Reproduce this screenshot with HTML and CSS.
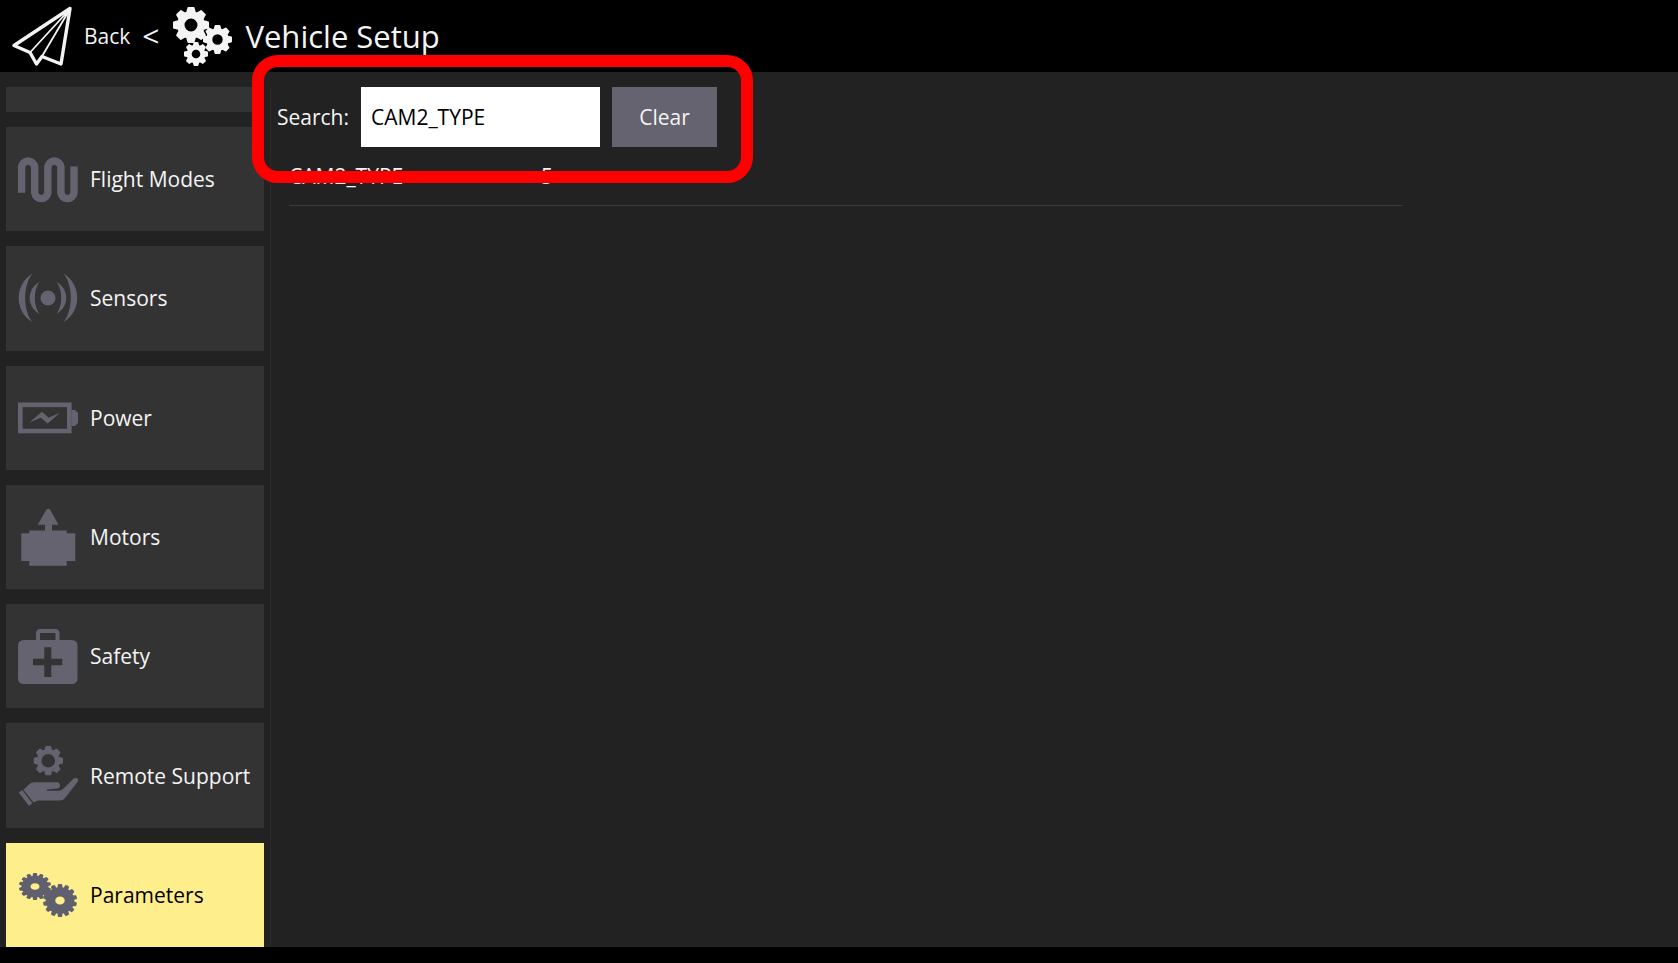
FILE: index.html
```
<!DOCTYPE html>
<html lang="en">
<head>
    <meta charset="UTF-8">
    <meta name="viewport" content="width=device-width, initial-scale=1.0">
    <title>Vehicle Setup</title>
    <link rel="stylesheet" href="styles.css">
</head>
<body>

<!-- Shared gear shapes, stroke-width on the gear sets the size of its hole -->
<svg class="defs" aria-hidden="true">
    <symbol id="gear" viewBox="-50 -50 100 100">
        <circle r="33" fill="none" stroke="currentColor" stroke-width="11"/>
        <circle r="26" fill="none" stroke="currentColor"/>
        <g fill="currentColor">
            <path id="teeth" d="M-8-50H8Q10-50 11-44L14-33H-14L-11-44Q-10-50-8-50ZM-8 50H8Q10 50 11 44L14 33H-14L-11 44Q-10 50-8 50Z"/>
            <use href="#teeth" transform="rotate(45)"/>
            <use href="#teeth" transform="rotate(90)"/>
            <use href="#teeth" transform="rotate(135)"/>
        </g>
    </symbol>
    <symbol id="cog" viewBox="-50 -50 100 100" preserveAspectRatio="none">
        <ellipse rx="28" ry="26" fill="none" stroke="currentColor" stroke-width="28"/>
        <g fill="currentColor">
            <path id="cogteeth" d="M-6-49Q0-52 6-49L8-36H-8ZM-6 49Q0 52 6 49L8 36H-8Z"/>
            <use href="#cogteeth" transform="rotate(26)"/>
            <use href="#cogteeth" transform="rotate(52)"/>
            <use href="#cogteeth" transform="rotate(78)"/>
            <use href="#cogteeth" transform="rotate(104)"/>
            <use href="#cogteeth" transform="rotate(129)"/>
            <use href="#cogteeth" transform="rotate(154)"/>
        </g>
    </symbol>
</svg>

<header class="toolbar">
    <a class="back" href="#">
        <svg class="icon" viewBox="0 0 60 60">
            <path d="M58 2.5L2 39.5L18 46.5L24.5 58L30 50.5L49 58Z" fill="none" stroke="currentColor" stroke-width="3.4" stroke-linejoin="round"/>
            <path d="M58 3L18 46.5M58 3L29 52" fill="none" stroke="currentColor" stroke-width="1.8"/>
        </svg>
        <span>Back</span>
        <span class="arrow">&lt;</span>
    </a>
    <svg class="icon" viewBox="0 0 60 60">
        <use href="#gear" x="1" y="1" width="36" height="36" stroke-width="16"/>
        <use href="#gear" x="31" y="19" width="29" height="29" stroke-width="16"/>
        <use href="#gear" x="12" y="36" width="24" height="24" stroke-width="16"/>
    </svg>
    <h1>Vehicle Setup</h1>
</header>

<div class="content">
    <nav class="sidebar">
        <div class="nav-cut"></div>
        <button type="button" class="nav-btn">
            <svg class="icon" viewBox="0 0 60 60">
                <path d="M3.6 43.8V17.8a6.6 6.6 0 0 1 13.1 0V43.8a6.6 6.6 0 0 0 13.1 0V17.8a6.6 6.6 0 0 1 13.1 0V43.8a6.6 6.6 0 0 0 13.1 0V17.5" fill="none" stroke="currentColor" stroke-width="7.4"/>
            </svg>
            <span>Flight Modes</span>
        </button>
        <button type="button" class="nav-btn">
            <svg class="icon" viewBox="0 0 60 60">
                <g fill="currentColor">
                    <circle cx="30" cy="30" r="7.5"/>
                    <path d="M14.3 5.5C-3.8 17-3.8 43 14.3 54C4.8 42 4.8 18 14.3 5.5Z"/>
                    <path d="M21.3 13.8C8.5 22 8.5 38 21.3 46C15.3 37 15.3 23 21.3 13.8Z"/>
                    <path d="M45.7 5.5C63.8 17 63.8 43 45.7 54C55.2 42 55.2 18 45.7 5.5Z"/>
                    <path d="M38.7 13.8C51.5 22 51.5 38 38.7 46C44.7 37 44.7 23 38.7 13.8Z"/>
                </g>
            </svg>
            <span>Sensors</span>
        </button>
        <button type="button" class="nav-btn">
            <svg class="icon" viewBox="0 0 60 60">
                <rect x="2.3" y="16.8" width="49" height="26.2" fill="none" stroke="currentColor" stroke-width="4.6"/>
                <path d="M53.5 22H57L60 25V35L57 38H53.5Z" fill="currentColor"/>
                <path d="M11.3 34.5L24 23.8L30.7 29.8L42 24.8L29.7 35.5L22.7 29.8Z" fill="currentColor"/>
            </svg>
            <span>Power</span>
        </button>
        <button type="button" class="nav-btn">
            <svg class="icon" viewBox="0 0 60 60">
                <path d="M28.5 2.5Q30.3 1 32 2.5L40.5 17.7H34V23.5H48.7V26.3H57.3V54H48.7V58.7H11.3V54H3.3V26.3H11.3V23.5H27V17.7H19.7Z" fill="currentColor"/>
            </svg>
            <span>Motors</span>
        </button>
        <button type="button" class="nav-btn">
            <svg class="icon" viewBox="0 0 60 60">
                <path d="M20 16V7.5Q20 5 22.5 5H37Q39.5 5 39.5 7.5V16" fill="none" stroke="currentColor" stroke-width="4"/>
                <path fill-rule="evenodd" d="M6 14H53.5Q59.5 14 59.5 20V52Q59.5 58 53.5 58H6Q0 58 0 52V20Q0 14 6 14ZM26.3 21.3V32.7H15V39.3H26.3V51H33.3V39.3H44.3V32.7H33.3V21.3Z" fill="currentColor"/>
            </svg>
            <span>Safety</span>
        </button>
        <button type="button" class="nav-btn">
            <svg class="icon" viewBox="0 0 60 60">
                <use href="#gear" x="15.5" y="0" width="29.5" height="29.5" stroke-width="6"/>
                <g fill="currentColor">
                    <path d="M0.7 46.5L4.3 44L14.3 57.3L11 60Z"/>
                    <path d="M5.5 43.8L11.5 38Q13 36.3 16 36.3H39Q42 36.5 42 39.5Q42 42 39 42.5L28.7 43.5V44.8H41Q43.5 44.8 45 43L55.5 32.8Q58 31 60 33Q60.5 34.5 59.5 36L47 52Q45 54.5 42 54.5H20L15.5 56.5Z"/>
                </g>
            </svg>
            <span>Remote Support</span>
        </button>
        <button type="button" class="nav-btn active">
            <svg class="icon" viewBox="0 0 60 60">
                <use href="#cog" x="1" y="8" width="32" height="27"/>
                <use href="#cog" x="25" y="19" width="34" height="33"/>
            </svg>
            <span>Parameters</span>
        </button>
    </nav>

    <main class="panel">
        <form class="search">
            <label for="search">Search:</label>
            <input type="text" id="search" name="search" value="CAM2_TYPE">
            <button type="button" class="clear-btn">Clear</button>
            <div class="highlight"></div>
        </form>
        <table class="params">
            <tbody>
                <tr>
                    <td class="name">CAM2_TYPE</td>
                    <td>5</td>
                </tr>
            </tbody>
        </table>
    </main>
</div>

<script>
    document.querySelector('.clear-btn').addEventListener('click', function() {
        document.getElementById('search').value = '';
    });
</script>

</body>
</html>
```
FILE: styles.css
```
* {
    box-sizing: border-box;
}

body {
    font-family: "Open Sans", "Noto Sans", sans-serif;
    font-size: 21px;
    line-height: 28px;
    color: #f4f4f4;
    background-color: #000;
    display: flex;
    flex-direction: column;
    min-height: 100vh;
    margin: 0;
    padding-bottom: 16px;
}

button,
input {
    font: inherit;
    border: none;
    border-radius: 0;
}

button {
    cursor: pointer;
}

.defs {
    position: absolute;
    width: 0;
    height: 0;
}

.icon {
    width: 60px;
    height: 60px;
    flex: none;
    overflow: visible;
}

.toolbar {
    display: flex;
    align-items: center;
    gap: 13px;
    height: 72px;
    padding: 0 12px;
}

.back {
    display: flex;
    align-items: center;
    gap: 12px;
    color: inherit;
    text-decoration: none;
}

.back .arrow {
    font-size: 30px;
}

.toolbar h1 {
    margin: 0;
    font-size: 31px;
    font-weight: normal;
    line-height: 40px;
}

.content {
    display: flex;
    flex: 1;
    gap: 6px;
    padding: 15px 0 0 6px;
    background-color: #222;
}

.sidebar {
    display: flex;
    flex-direction: column;
    gap: 15px;
    width: 258px;
    flex: none;
}

.nav-cut {
    height: 25px;
    background-color: #333;
}

.nav-btn {
    display: flex;
    align-items: center;
    flex: 1;
    gap: 12px;
    min-height: 80px;
    padding: 0 12px;
    color: #666370;
    background-color: #333;
    text-align: left;
    white-space: nowrap;
}

.nav-btn span {
    color: #f4f4f4;
}

.nav-btn.active {
    color: #5f5f6e;
    background-color: #ffee8c;
}

.nav-btn.active span {
    color: #000;
}

.panel {
    flex: 1;
    padding: 0 8px 0 6px;
    border-left: 1px solid #2b2b2b;
}

.search {
    position: relative;
    display: flex;
    align-items: center;
    gap: 12px;
    width: max-content;
}

.search input {
    width: 239px;
    height: 60px;
    padding: 0 10px;
    color: #000;
    background-color: #fff;
}

.clear-btn {
    width: 105px;
    height: 60px;
    padding: 0;
    color: #f4f4f4;
    background-color: #666370;
}

/* red frame drawn over the search row */
.highlight {
    position: absolute;
    top: -32px;
    right: -36px;
    bottom: -36px;
    left: -25px;
    border: 12px solid #f00;
    border-radius: 26px;
    pointer-events: none;
}

.params {
    width: 80%;
    margin: 12px 0 0 12px;
    border-collapse: collapse;
}

.params td {
    padding: 3px 0 15px;
    border-bottom: 1px solid #3a3a3a;
}

.params .name {
    width: 252px;
}
```
